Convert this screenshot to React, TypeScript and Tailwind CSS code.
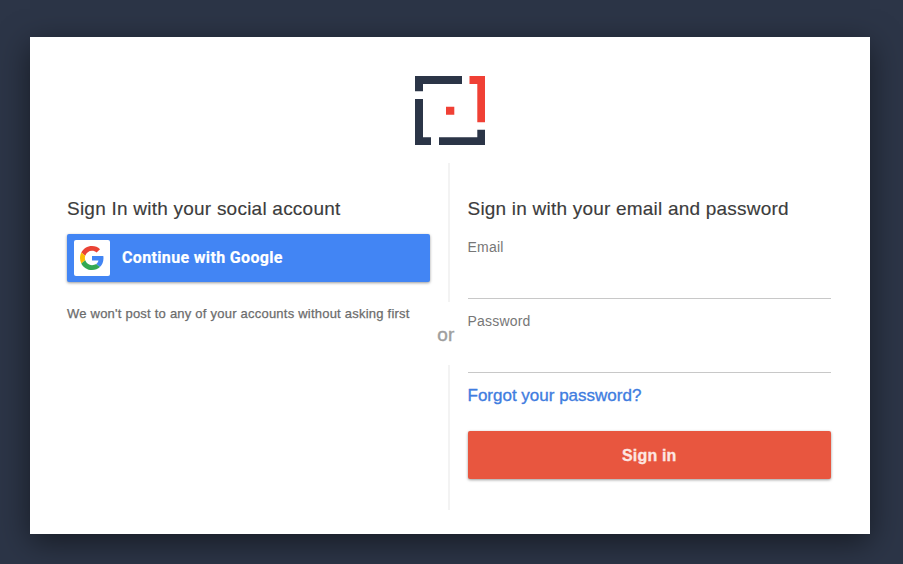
import React from "react";

function Logo() {
  return (
    <svg width="70" height="69" viewBox="0 0 70 69" aria-hidden="true">
      <path fill="#2b3547" d="M0 0H47V8H8V15.3H0ZM0 23H8V61.3H16V69H0ZM24 61.3H62.3V53.7H70V69H24Z" />
      <path fill="#f04035" d="M54.5 0H70V46.2H62.3V8H54.5ZM31 30.7H39.3V38.8H31Z" />
    </svg>
  );
}

function GoogleIcon() {
  return (
    <svg width="24" height="24" viewBox="0 0 48 48" aria-hidden="true">
      <path fill="#EA4335" d="M24 9.5c3.54 0 6.71 1.22 9.21 3.6l6.85-6.85C35.9 2.38 30.47 0 24 0 14.62 0 6.51 5.38 2.56 13.22l7.98 6.19C12.43 13.72 17.74 9.5 24 9.5z" />
      <path fill="#4285F4" d="M46.98 24.55c0-1.57-.15-3.09-.38-4.55H24v9.02h12.94c-.58 2.96-2.26 5.48-4.78 7.18l7.73 6c4.51-4.18 7.09-10.36 7.09-17.65z" />
      <path fill="#FBBC05" d="M10.53 28.59c-.48-1.45-.76-2.99-.76-4.59s.27-3.14.76-4.59l-7.98-6.19C.92 16.46 0 20.12 0 24c0 3.88.92 7.54 2.56 10.78l7.97-6.19z" />
      <path fill="#34A853" d="M24 48c6.48 0 11.93-2.13 15.89-5.81l-7.73-6c-2.15 1.45-4.92 2.3-8.16 2.3-6.26 0-11.57-4.22-13.47-9.91l-7.98 6.19C6.51 42.62 14.62 48 24 48z" />
    </svg>
  );
}

function Field({ label, type }: { label: string; type: string }) {
  return (
    <label className="flex h-[74px] flex-col border-b border-[#c8c8c8]">
      <span className="pt-3 text-[14px] leading-5 tracking-[0.2px] text-[#777777]">{label}</span>
      <input type={type} className="h-10 w-full bg-transparent outline-none" />
    </label>
  );
}

export default function App() {
  return (
    <div className="h-[564px] w-[903px] overflow-hidden bg-[#2c3547] pt-[37px] pl-[30px] font-['Liberation_Sans',Arial,sans-serif]">
      <main className="flex h-[497px] w-[840px] flex-col bg-white pt-[39px] pl-[37px] shadow-[0_8px_30px_rgba(0,0,0,0.5)]">
        <div className="flex h-[87px] w-[766px] justify-center">
          <Logo />
        </div>
        <div className="flex h-[347px]">
          <section className="w-[363px] pt-[34px]">
            <h2 className="text-[19px] leading-6 tracking-[0.23px] whitespace-nowrap text-[#3c3c3c] [-webkit-text-stroke:0.15px_#3c3c3c]">Sign In with your social account</h2>
            <button className="mt-[13px] flex h-12 w-full items-center rounded-[2px] bg-[#4285f4] pl-[7px] shadow-[0_1px_3px_rgba(0,0,0,0.4)]">
              <span className="flex size-9 items-center justify-center rounded-[2px] bg-white">
                <GoogleIcon />
              </span>
              <span className="ml-3 font-[Roboto,sans-serif] text-[16px] leading-6 font-bold tracking-[0.34px] whitespace-nowrap text-white [-webkit-text-stroke:0.2px_white]">Continue with Google</span>
            </button>
            <p className="mt-[22px] text-[13px] leading-5 tracking-[0.225px] whitespace-nowrap text-[#6c6c6c] [-webkit-text-stroke:0.25px_#6c6c6c]">We won't post to any of your accounts without asking first</p>
          </section>
          <div className="flex w-[38px] flex-col items-center">
            <div className="h-[139px] w-[2px] bg-[#f3f3f3]" />
            <div className="flex h-[63px] items-center pt-[3px] pr-[6px] text-[19px] tracking-[0.2px] text-[#9e9e9e] [-webkit-text-stroke:0.4px_#9e9e9e]">or</div>
            <div className="h-[145px] w-[2px] bg-[#f3f3f3]" />
          </div>
          <section className="-ml-[0.5px] w-[363.5px] pt-[34px]">
            <h2 className="text-[19px] leading-6 tracking-[0.21px] whitespace-nowrap text-[#3c3c3c] [-webkit-text-stroke:0.15px_#3c3c3c]">Sign in with your email and password</h2>
            <div className="mt-1">
              <Field label="Email" type="email" />
              <Field label="Password" type="password" />
            </div>
            <a className="mt-[11px] block text-[17px] leading-6 whitespace-nowrap text-[#3f7de0] [-webkit-text-stroke:0.35px_#3f7de0]" href="#">Forgot your password?</a>
            <button className="mt-[23px] h-12 w-full rounded-[2px] bg-[#e8563f] pt-0.5 text-[16px] font-bold tracking-[0.15px] text-[#fde6e2] shadow-[0_1px_3px_rgba(0,0,0,0.4)] [-webkit-text-stroke:0.3px_#fde6e2]">Sign in</button>
          </section>
        </div>
      </main>
    </div>
  );
}
